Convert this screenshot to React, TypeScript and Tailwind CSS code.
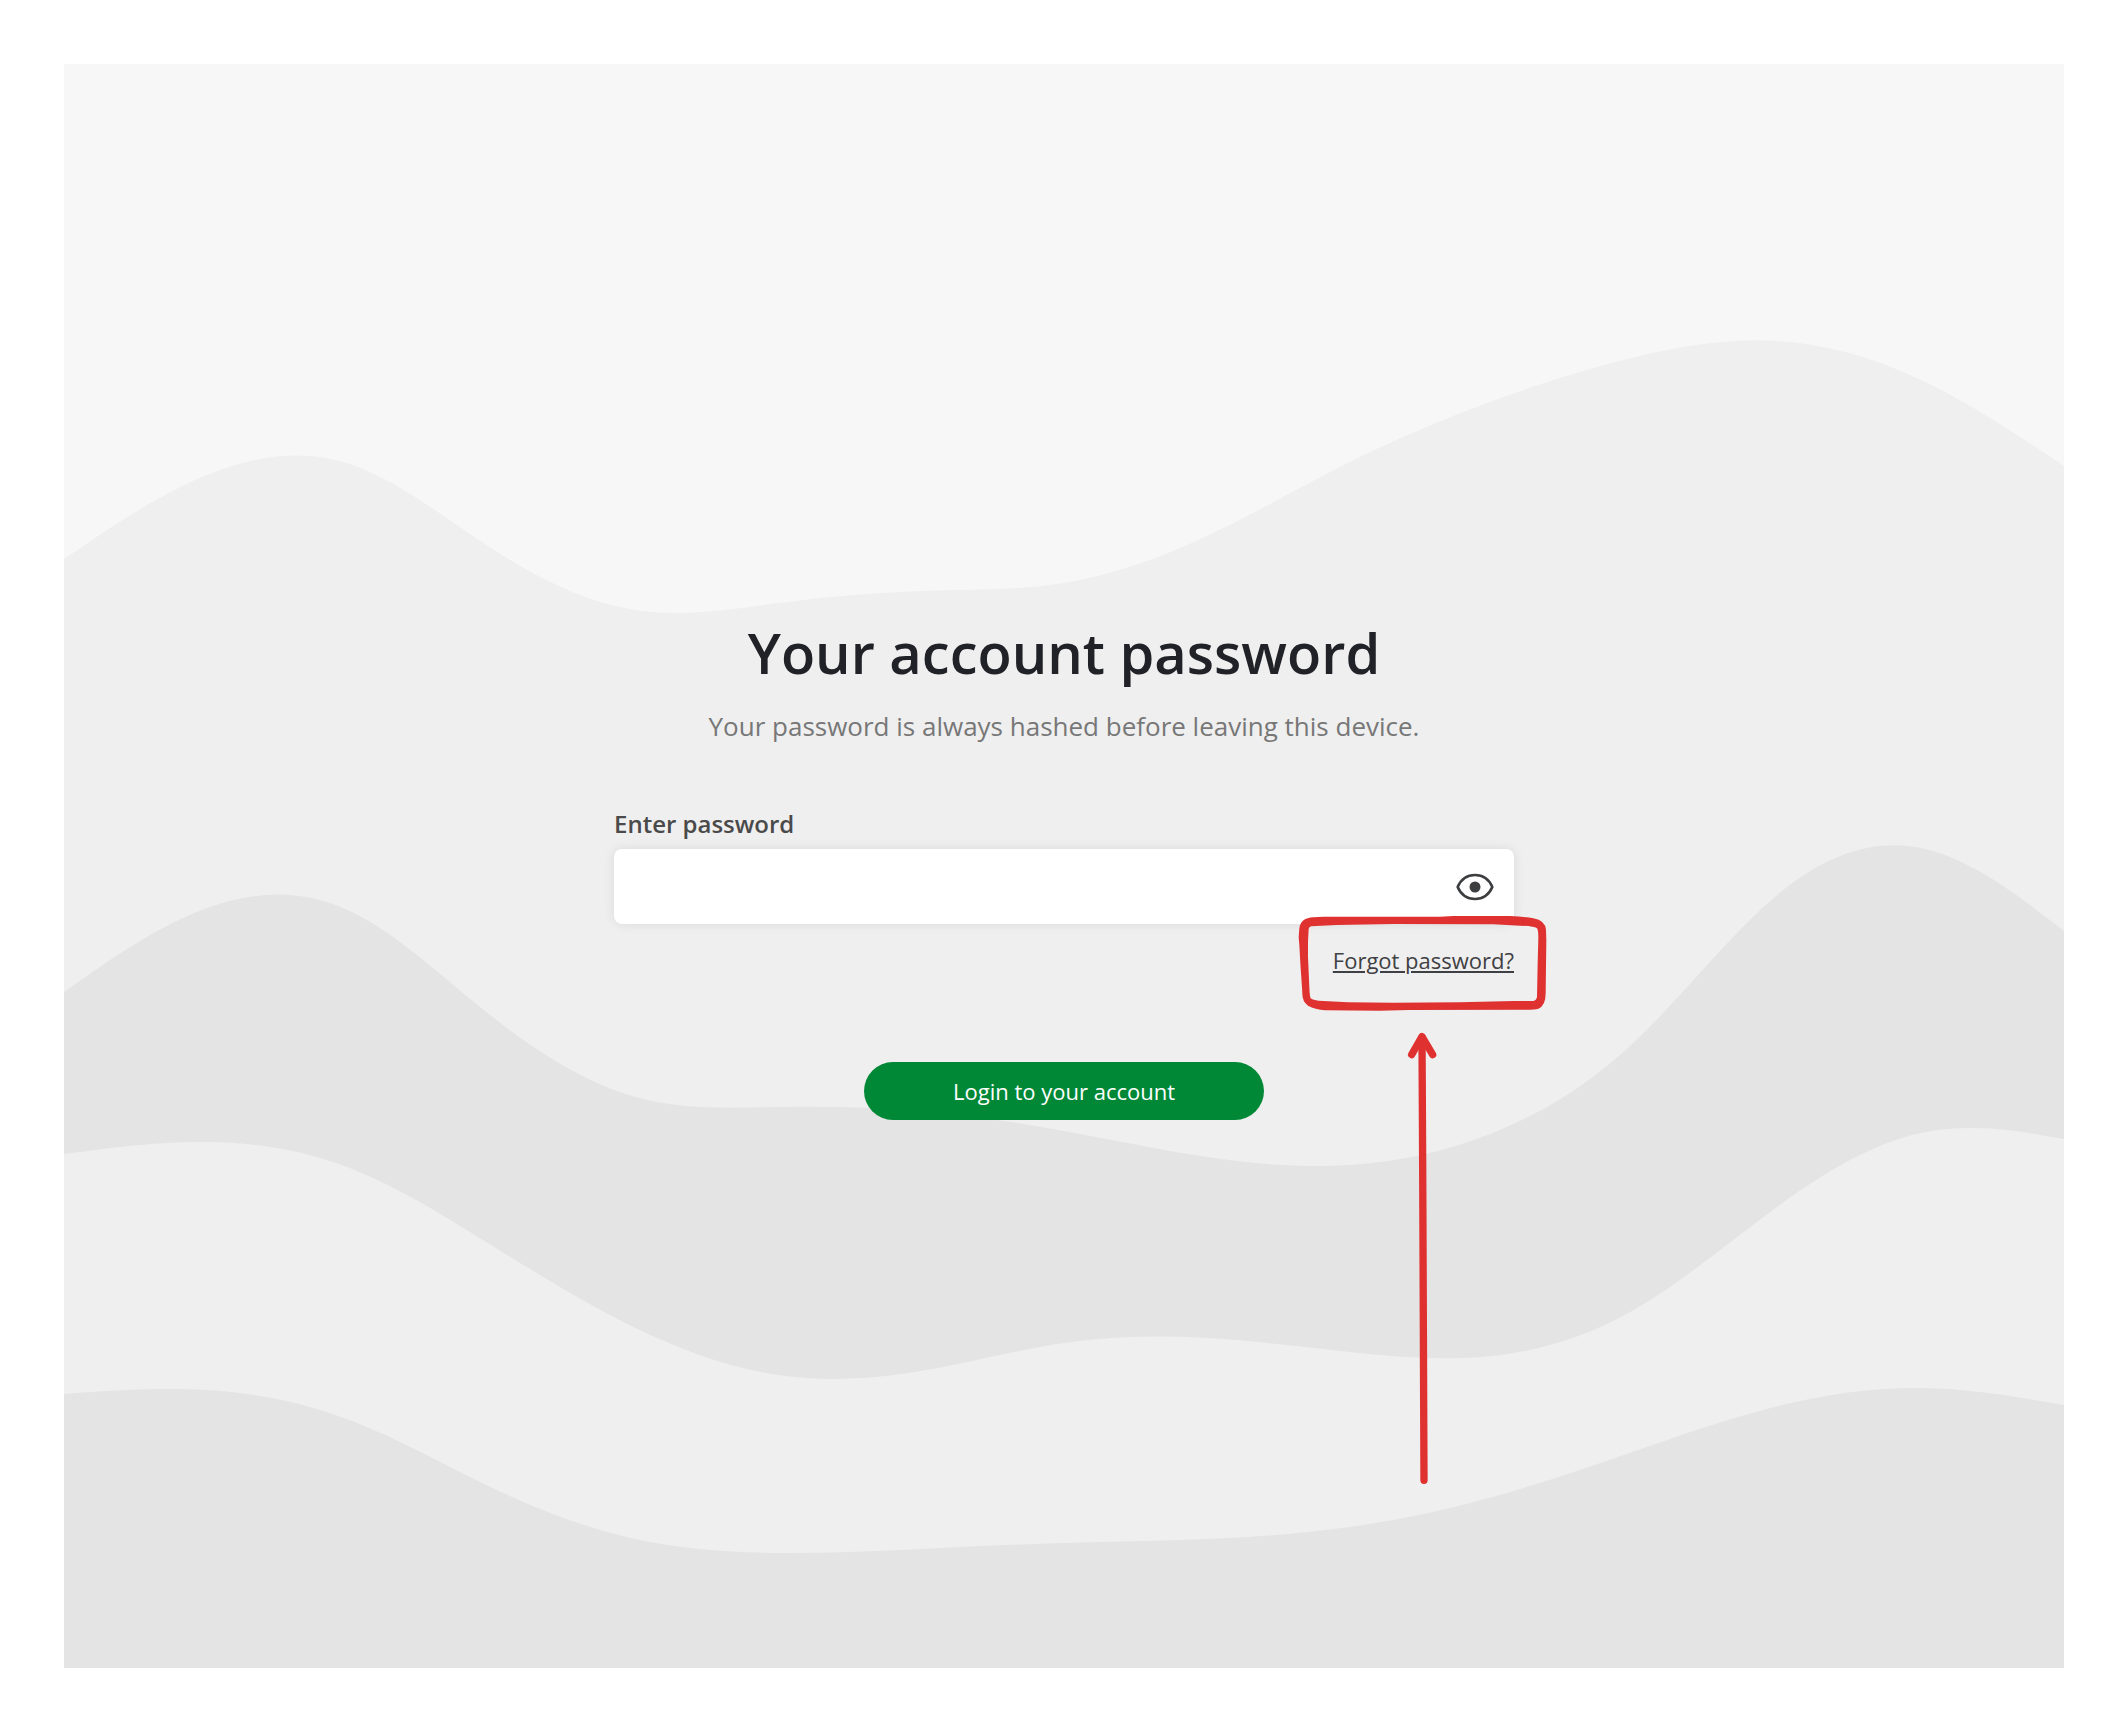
import { useState } from "react";

const COLUMN = 2000 / 14;

/** Smooth B-spline through evenly spaced heights, closed along the bottom edge. */
function wavePath(heights: number[]): string {
  const last = heights.length - 1;
  const p = [...heights];
  for (let pass = 0; pass < 40; pass++) {
    for (let i = 1; i < last; i++) {
      p[i] = (6 * heights[i] - p[i - 1] - p[i + 1]) / 4;
    }
  }
  const at = (x: number, y: number) => `${(x * COLUMN).toFixed(1)} ${y.toFixed(1)}`;
  let d = `M${at(0, p[0])}L${at(1 / 6, (5 * p[0] + p[1]) / 6)}`;
  for (let i = 0; i < last; i++) {
    const isEnd = i === last - 1;
    const x = isEnd ? last - 1 / 6 : i + 1;
    const y = isEnd ? (p[i] + 5 * p[last]) / 6 : heights[i + 1];
    d += `C${at(i + 1 / 3, (2 * p[i] + p[i + 1]) / 3)} ${at(i + 2 / 3, (p[i] + 2 * p[i + 1]) / 3)} ${at(x, y)}`;
  }
  return `${d}L${at(last, p[last])}V1604H0Z`;
}

const waves = [
  {
    fill: "#efefef",
    heights: [495, 411, 400, 485, 546, 539, 527, 519, 472, 398, 337, 293, 277, 316, 402],
  },
  {
    fill: "#e4e4e4",
    heights: [928, 844, 847, 953, 1033, 1043, 1047, 1067, 1093, 1101, 1069, 977, 830, 784, 867],
  },
  {
    fill: "#efefef",
    heights: [1090, 1078, 1104, 1182, 1264, 1311, 1307, 1279, 1274, 1288, 1292, 1245, 1142, 1069, 1075],
  },
  {
    fill: "#e4e4e4",
    heights: [1330, 1326, 1356, 1424, 1475, 1489, 1485, 1479, 1475, 1463, 1433, 1387, 1342, 1324, 1341],
  },
];

function Waves() {
  return (
    <svg
      aria-hidden="true"
      className="absolute inset-0 h-full w-full"
      viewBox="0 0 2000 1604"
      preserveAspectRatio="none"
    >
      {waves.map((wave, i) => (
        <path key={i} fill={wave.fill} d={wavePath(wave.heights)} />
      ))}
    </svg>
  );
}

function EyeIcon() {
  return (
    <svg aria-hidden="true" viewBox="0 0 114 84" className="h-7 w-[38px]">
      <path
        d="M5 42C15 19 34 6 57 6S99 19 109 42C99 65 80 78 57 78S15 65 5 42Z"
        fill="none"
        stroke="#3d3e40"
        strokeWidth="8"
        strokeLinejoin="round"
      />
      <circle cx="57" cy="42" r="16.5" fill="#3d3e40" />
    </svg>
  );
}

function Callout() {
  return (
    <svg
      aria-hidden="true"
      viewBox="0 0 870 2010"
      className="pointer-events-none absolute -top-[114px] -right-14 h-[670px] w-[290px] max-w-none"
    >
      <path
        fill="#e03131"
        fillRule="evenodd"
        d="M130 260L480 260L520 258L690 258Q735 260 760 265Q797 272 798 300L799 330L797 490Q797 528 775 536Q765 539 740 539L385 540L300 542L135 541Q105 538 84 527Q66 515 67 488L61 400L58 345L56 322L58 295Q62 264 100 262ZM93 289L170 285L340 282L640 283L720 287Q760 288 771 295Q775 300 775 325L773 400L771 500Q769 511 760 513L700 513L540 517L340 518L205 517L130 513Q98 512 92 505Q89 500 88 470L84 380L84 335L86 297Q87 291 93 289Z"
      />
      <g fill="none" stroke="#e03131" strokeLinecap="round" strokeLinejoin="round">
        <path strokeWidth="22" d="M426 622L428 1000L432 1951" />
        <path strokeWidth="22" d="M395 674L426 620L458 674" />
      </g>
    </svg>
  );
}

export default function App() {
  const [visible, setVisible] = useState(false);

  return (
    <div className="flex min-h-screen bg-white p-16 font-['Open_Sans',sans-serif]">
      <main className="relative flex flex-1 flex-col items-center justify-center bg-[#f7f7f7]">
        <Waves />
        <form
          className="relative flex w-full max-w-[900px] flex-col items-center"
          onSubmit={(e) => e.preventDefault()}
        >
          <h1 className="text-[56px] leading-[80px] font-semibold text-[#212227]">
            Your account password
          </h1>
          <p className="mt-4 text-[26px] leading-9 text-[#777777]">
            Your password is always hashed before leaving this device.
          </p>
          <label
            htmlFor="password"
            className="mt-16 self-start text-[24px] leading-8 font-semibold text-[#4a4a4a]"
          >
            Enter password
          </label>
          <div className="mt-[9px] flex h-[75px] w-full items-center rounded-lg bg-white pr-5 shadow-[0_0_12px_rgba(0,0,0,0.09)]">
            <input
              id="password"
              type={visible ? "text" : "password"}
              className="h-full min-w-0 flex-1 rounded-lg px-5 text-[22px] outline-none"
            />
            <button
              type="button"
              aria-label={visible ? "Hide password" : "Show password"}
              onClick={() => setVisible(!visible)}
            >
              <EyeIcon />
            </button>
          </div>
          <div className="relative mt-5 flex self-end">
            <a
              href="#forgot"
              className="text-[22px] leading-8 text-[#3f4043] underline"
            >
              Forgot password?
            </a>
            <Callout />
          </div>
          <button
            type="submit"
            className="mt-[86px] h-[58px] w-[400px] rounded-full bg-[#008837] text-[22px] leading-8 text-white"
          >
            Login to your account
          </button>
        </form>
      </main>
    </div>
  );
}
